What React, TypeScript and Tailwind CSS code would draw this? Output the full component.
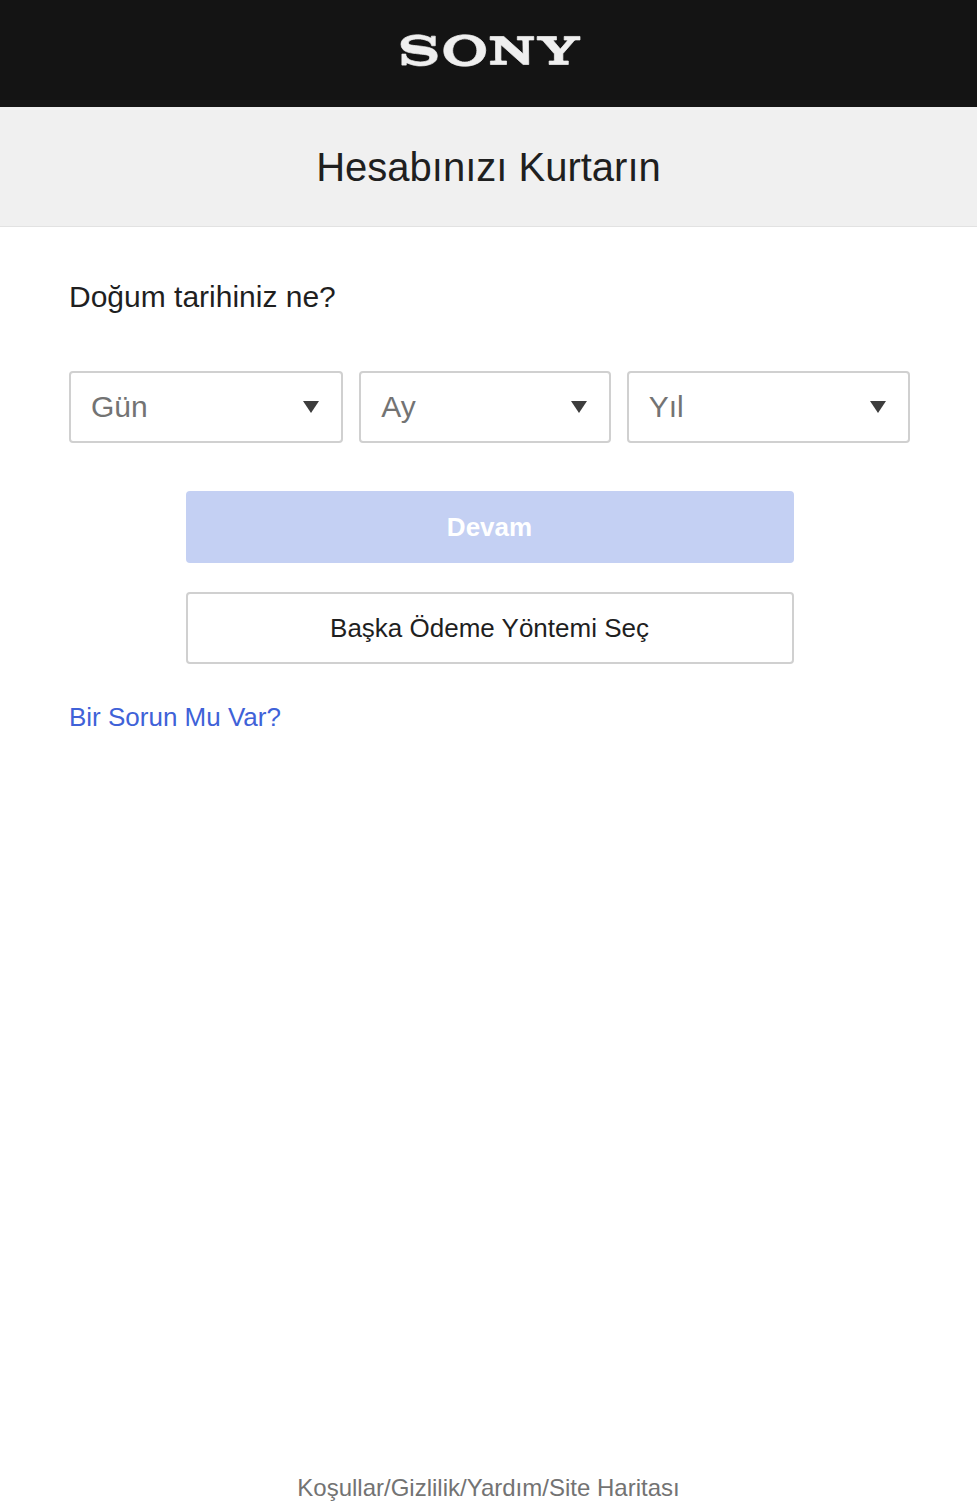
import { SiSony } from 'react-icons/si'

const dateFields = [
  { id: 'day', label: 'Gün' },
  { id: 'month', label: 'Ay' },
  { id: 'year', label: 'Yıl' },
]

const footerLinks = ['Koşullar', 'Gizlilik', 'Yardım', 'Site Haritası']

function DateSelect({ id, label }: { id: string; label: string }) {
  return (
    <div className="relative">
      <select
        id={id}
        name={id}
        aria-label={label}
        className="block h-[72px] w-full appearance-none rounded border-2 border-[#d0d0d0] bg-white pb-0.5 pl-5 pr-12 text-[30px] text-[#737373]"
      >
        <option>{label}</option>
      </select>
      <svg
        viewBox="0 0 16 12"
        className="pointer-events-none absolute right-6 top-[30px] h-3 w-4 fill-[#3d3d3d]"
        aria-hidden="true"
      >
        <path d="M0 0h16L8 12z" />
      </svg>
    </div>
  )
}

function App() {
  return (
    <div className="flex min-h-screen flex-col bg-white font-['Liberation_Sans',Arial,sans-serif] text-[#1f1f1f]">
      {/* the wordmark sits in the middle of a square icon, so the spare height is clipped */}
      <header className="flex h-[107px] items-center justify-center overflow-hidden bg-[#141414] pb-1.5 pl-1">
        <SiSony
          className="size-[179px] shrink-0 overflow-visible stroke-current stroke-[0.1] text-[#efefef]"
          role="img"
          aria-label="Sony"
        />
      </header>

      <div className="flex h-[120px] items-center justify-center border-b border-[#e2e2e2] bg-[#f0f0f0]">
        <h1 className="text-[40px] leading-[48px]">Hesabınızı Kurtarın</h1>
      </div>

      <main className="flex-1 pl-[69px] pr-[67px] pt-12">
        <h2 className="text-[30px] leading-[44px]">Doğum tarihiniz ne?</h2>

        <form onSubmit={e => e.preventDefault()}>
          <div className="mt-[52px] grid grid-cols-[274fr_251fr_283fr] gap-4">
            {dateFields.map(field => (
              <DateSelect key={field.id} {...field} />
            ))}
          </div>

          <div className="mx-auto mt-12 flex max-w-[608px] flex-col gap-[29px] text-[26px]">
            <button type="submit" disabled className="h-[72px] rounded bg-[#c4d0f3] font-bold text-white">
              Devam
            </button>
            <button type="button" className="h-[72px] rounded border-2 border-[#d0d0d0] bg-white">
              Başka Ödeme Yöntemi Seç
            </button>
          </div>
        </form>

        <a href="#" className="mt-[35px] inline-block text-[26px] leading-9 text-[#3f62d8]">
          Bir Sorun Mu Var?
        </a>
      </main>

      <footer className="flex justify-center pb-[5px] text-2xl text-[#737373]">
        {footerLinks.map((link, i) => (
          <span key={link}>
            {i > 0 && '/'}
            <a href="#">{link}</a>
          </span>
        ))}
      </footer>
    </div>
  )
}

export default App
